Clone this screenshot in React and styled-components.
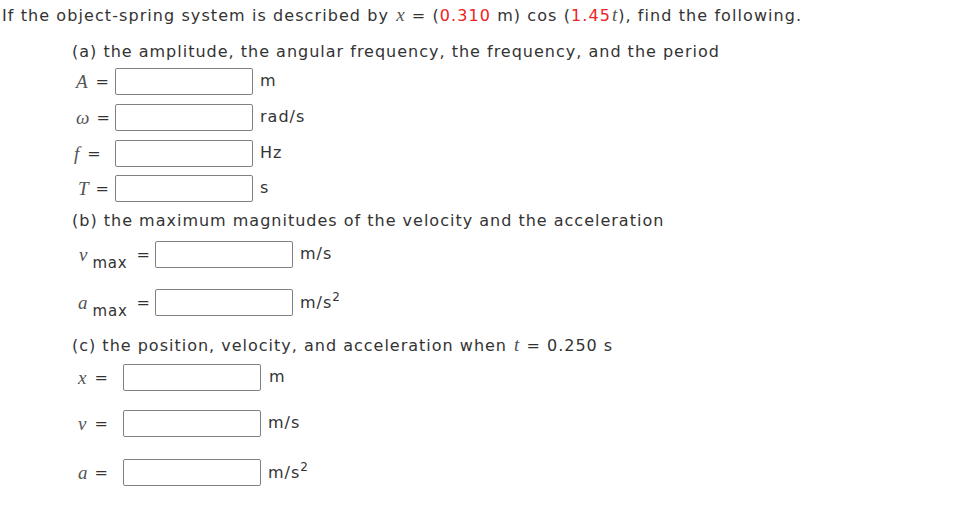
import React from "react";
import styled, { createGlobalStyle } from "styled-components";

const Global = createGlobalStyle`
  html, body { margin: 0; padding: 0; background: #fff; }
  body {
    font-family: "DejaVu Sans", Verdana, sans-serif;
    font-size: 16px;
    color: #333;
    letter-spacing: 1px;
  }
`;

const Page = styled.div`
  padding: 0 0 0 2px;
  width: 962px;
  height: 521px;
  box-sizing: border-box;
`;

const Header = styled.div`
  height: 32px;
  line-height: 32px;
  white-space: nowrap;
  letter-spacing: 1.08px;
`;

const Red = styled.span`
  color: #ee2222;
`;

const Var = styled.i`
  font-family: "Liberation Serif", "Times New Roman", serif;
  font-style: italic;
  font-size: 19px;
  line-height: 1;
  letter-spacing: 0;
  color: #555;
  margin: 0 1px;
`;

const Section = styled.div`
  margin-left: 70px;
  margin-top: ${(p) => p.$top}px;
  display: flex;
  flex-direction: column;
`;

const Title = styled.div`
  height: 20px;
  line-height: 20px;
  white-space: nowrap;
`;

const Row = styled.div`
  display: flex;
  align-items: center;
  height: 27px;
  margin-top: ${(p) => p.$top}px;
`;

const Label = styled.div`
  width: ${(p) => p.$w}px;
  padding-left: ${(p) => p.$pl}px;
  box-sizing: border-box;
  display: flex;
  align-items: center;
  white-space: nowrap;
`;

const Eq = styled.span`
  margin-left: ${(p) => p.$ml ?? 7}px;
`;

const Sub = styled.span`
  position: relative;
  top: 8px;
  margin-left: 4px;
  font-size: 15px;
  letter-spacing: 0.8px;
`;

const Input = styled.input`
  width: 138px;
  height: 27px;
  box-sizing: border-box;
  border: 1px solid #808080;
  border-radius: 2px;
  margin: 0;
  padding: 0 4px;
  background: #fff;
  outline: none;
`;

const Unit = styled.span`
  margin-left: ${(p) => p.$ml ?? 7}px;
  position: relative;
  top: ${(p) => p.$dy ?? -1}px;
  white-space: nowrap;
`;

const Sup = styled.sup`
  font-size: 12px;
  position: relative;
  top: -1px;
  letter-spacing: 0;
`;

export default function App() {
  return (
    <Page>
      <Global />
      <Header>
        If the object-spring system is described by <Var>x</Var> = (<Red>0.310</Red> m) cos (<Red>1.45</Red><Var>t</Var>), find the following.
      </Header>

      <Section $top={10}>
        <Title>(a) the amplitude, the angular frequency, the frequency, and the period</Title>
        <Row $top={6}>
          <Label $w={43} $pl={3}><Var>A</Var><Eq $ml={7}>=</Eq></Label>
          <Input />
          <Unit>m</Unit>
        </Row>
        <Row $top={9}>
          <Label $w={43} $pl={3}><Var>ω</Var><Eq $ml={6}>=</Eq></Label>
          <Input />
          <Unit>rad/s</Unit>
        </Row>
        <Row $top={9}>
          <Label $w={43} $pl={1}><Var>f</Var><Eq $ml={7}>=</Eq></Label>
          <Input />
          <Unit>Hz</Unit>
        </Row>
        <Row $top={8}>
          <Label $w={43} $pl={5}><Var>T</Var><Eq $ml={6}>=</Eq></Label>
          <Input />
          <Unit>s</Unit>
        </Row>
      </Section>

      <Section $top={9}>
        <Title>(b) the maximum magnitudes of the velocity and the acceleration</Title>
        <Row $top={10}>
          <Label $w={83} $pl={6}><Var>v</Var><Sub>max</Sub><Eq $ml={9}>=</Eq></Label>
          <Input />
          <Unit>m/s</Unit>
        </Row>
        <Row $top={21}>
          <Label $w={83} $pl={5}><Var>a</Var><Sub>max</Sub><Eq $ml={9}>=</Eq></Label>
          <Input />
          <Unit>m/s<Sup>2</Sup></Unit>
        </Row>
      </Section>

      <Section $top={19}>
        <Title>(c) the position, velocity, and acceleration when <Var>t</Var> = 0.250 s</Title>
        <Row $top={9}>
          <Label $w={51} $pl={5}><Var>x</Var><Eq $ml={7}>=</Eq></Label>
          <Input />
          <Unit $ml={8}>m</Unit>
        </Row>
        <Row $top={19}>
          <Label $w={51} $pl={5}><Var>v</Var><Eq $ml={7}>=</Eq></Label>
          <Input />
          <Unit>m/s</Unit>
        </Row>
        <Row $top={22}>
          <Label $w={51} $pl={5}><Var>a</Var><Eq $ml={6}>=</Eq></Label>
          <Input />
          <Unit>m/s<Sup>2</Sup></Unit>
        </Row>
      </Section>
    </Page>
  );
}
